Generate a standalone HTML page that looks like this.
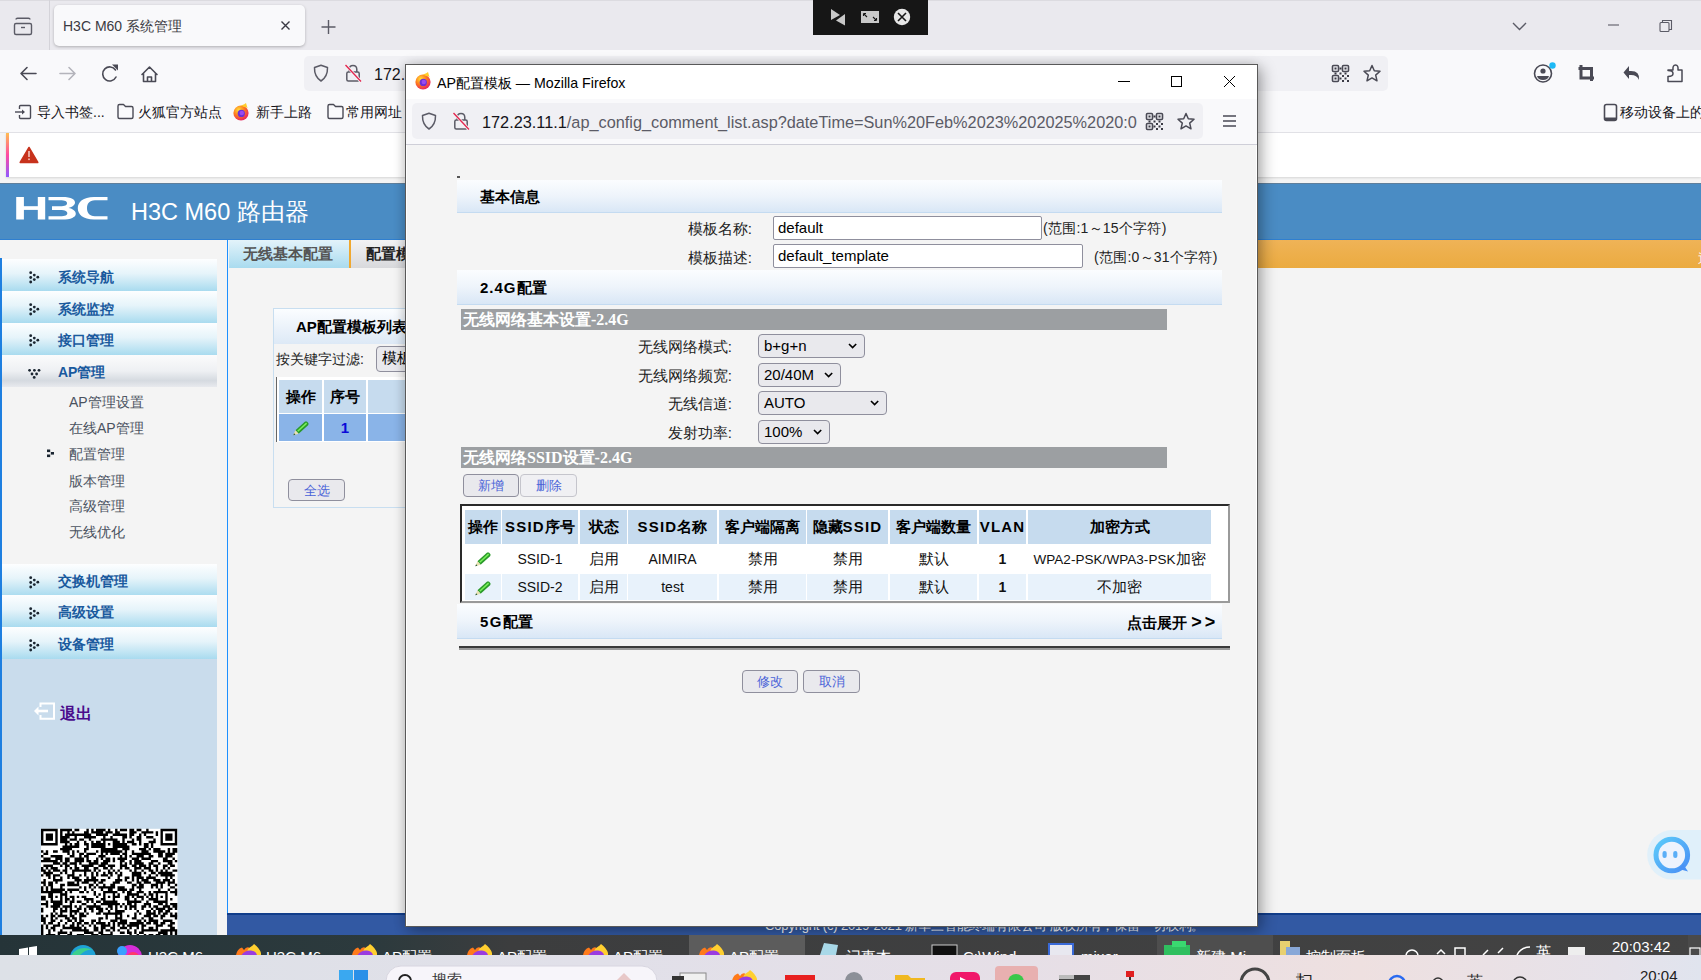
<!DOCTYPE html>
<html><head><meta charset="utf-8">
<style>
*{box-sizing:border-box;margin:0;padding:0}
html,body{width:1701px;height:980px;overflow:hidden;background:#f4f4f4;font-family:"Liberation Sans",sans-serif;}
.a{position:absolute}
svg{position:absolute;overflow:visible}
/* browser chrome */
#tabbar{left:0;top:0;width:1701px;height:50px;background:#eae9ee;border-top:1px solid #dcdbe0}
#tab{left:54px;top:5px;width:251px;height:41px;background:#f9f9fb;border-radius:5px;box-shadow:0 1px 3px rgba(0,0,0,.25)}
#nav{left:0;top:50px;width:1701px;height:42px;background:#f9f9fb}
#url{left:304px;top:56px;width:1084px;height:35px;background:#f0f0f4;border-radius:5px}
#bm{left:0;top:92px;width:1701px;height:41px;background:#f9f9fb;border-bottom:1px solid #e3e3e8}
.bmt{font-size:14px;color:#15141a;top:104px;white-space:nowrap}
#notif{left:6px;top:133px;width:1695px;height:44px;background:#fff;box-shadow:0 1px 2px rgba(0,0,0,.12)}
#notifbar{left:6px;top:133px;width:3px;height:44px;background:linear-gradient(#ffbd4f,#ff4aa2 50%,#9059ff)}
/* page */
#hdr{left:0;top:183px;width:1701px;height:57px;background:#4a8cc4;border-top:1px solid #5f7f9c;border-bottom:1px solid #2f7fd0}
#side{left:0;top:240px;width:227px;height:695px;background:#f4f4f4}
#sideline{left:227px;top:240px;width:1px;height:673px;background:#1e90ff}
#sideleft{left:0;top:258px;width:2px;height:677px;background:#1e7fe0}
.mi{left:2px;width:215px;height:32px;background:linear-gradient(#fdfeff 0%,#e6f4fa 45%,#a9dbef 100%)}
.mt{left:58px;font-size:14px;font-weight:bold;color:#1a5a9e;white-space:nowrap}
.si{left:69px;font-size:14px;color:#4a5260;white-space:nowrap}
#footer{left:227px;top:913px;width:1474px;height:22px;background:#3259a3;border-top:2px solid #113d8a}
#tb1{left:0;top:935px;width:1701px;height:20px;background:#2b3436}
#tb2{left:0;top:955px;width:1701px;height:25px;background:linear-gradient(90deg,#dfe3ea,#e2dfea 40%,#e8e0e6 70%,#eadfe2)}
/* popup */
#pop{left:405px;top:64px;width:853px;height:863px;background:#f4f4f4;border:1px solid #595959;box-shadow:4px 4px 14px rgba(0,0,0,.33),-2px 0 10px rgba(0,0,0,.1),inset 1px 0 #fff,inset -1px 0 #fff}
.band{left:52px;width:765px;height:34px;background:linear-gradient(#fbfdff 0%,#eef4fb 50%,#d9e7f6 100%);border-bottom:1px solid #c4dbf1}
.bt{font-size:15px;font-weight:bold;color:#000;white-space:nowrap}
.lbl{font-size:15px;color:#222;white-space:nowrap;text-align:right}
.gbar{left:56px;width:706px;height:21px;background:#9c9fa2}
.gt{left:2px;top:0;font-family:"Liberation Serif",serif;font-size:16px;font-weight:bold;color:#fff;white-space:nowrap;line-height:21px}
.sel{height:24px;background:#e9e9ed;border:1px solid #8f8f9d;border-radius:4px;font-size:15px;color:#000;padding-left:5px;line-height:22px}
.btn{height:23px;background:#e9e9ed;border:1px solid #8f8f9d;border-radius:4px;font-size:13px;color:#4a63d8;text-align:center;line-height:21px}
.th{top:5px;height:34px;background:#c6dbee;font-size:15px;font-weight:bold;color:#000;text-align:center;line-height:34px;white-space:nowrap}
.td{height:29px;font-size:15px;color:#111;text-align:center;line-height:29px;white-space:nowrap}
</style></head><body>

<!-- ===== browser chrome ===== -->
<div id="tabbar" class="a"></div>
<div class="a" style="left:49px;top:0;width:1px;height:50px;background:#d4d3d9"></div>
<div id="tab" class="a"></div>
<div class="a" style="left:63px;top:18px;font-size:14px;color:#3b3a42;white-space:nowrap">H3C M60 系统管理</div>
<div id="nav" class="a"></div>
<div id="url" class="a"></div>
<div id="bm" class="a"></div>
<div class="a bmt" style="left:37px">导入书签...</div>
<div class="a bmt" style="left:138px">火狐官方站点</div>
<div class="a bmt" style="left:256px">新手上路</div>
<div class="a bmt" style="left:346px">常用网址</div>
<div class="a bmt" style="left:1620px">移动设备上的</div>
<div id="notif" class="a"></div>
<div id="notifbar" class="a"></div>

<!-- ===== page ===== -->
<div id="hdr" class="a"></div>
<div class="a" style="left:131px;top:196px;font-size:23.5px;color:#fff;white-space:nowrap">H3C M60 路由器</div>
<div id="side" class="a"></div>
<div id="sideleft" class="a"></div>
<div id="sideline" class="a"></div>
<div class="a" style="left:2px;top:659px;width:215px;height:276px;background:#c9dcec"></div>

<div class="a mi" style="top:259px"></div><div class="a mt" style="top:269px">系统导航</div>
<div class="a mi" style="top:291px"></div><div class="a mt" style="top:301px">系统监控</div>
<div class="a mi" style="top:323px"></div><div class="a mt" style="top:332px">接口管理</div>
<div class="a mi" style="top:355px;background:linear-gradient(#fbfbfc,#eef0f3 50%,#d5dae0 80%,#e8eaee)"></div><div class="a mt" style="top:364px">AP管理</div>
<div class="a si" style="top:394px">AP管理设置</div>
<div class="a si" style="top:420px">在线AP管理</div>
<div class="a si" style="top:446px">配置管理</div>
<div class="a si" style="top:473px">版本管理</div>
<div class="a si" style="top:498px">高级管理</div>
<div class="a si" style="top:524px">无线优化</div>
<div class="a mi" style="top:564px"></div><div class="a mt" style="top:573px">交换机管理</div>
<div class="a mi" style="top:595px"></div><div class="a mt" style="top:604px">高级设置</div>
<div class="a mi" style="top:627px"></div><div class="a mt" style="top:636px">设备管理</div>
<div class="a" style="left:60px;top:704px;font-size:16px;font-weight:bold;color:#4a0c8c">退出</div>

<!-- tabs -->
<div class="a" style="left:229px;top:240px;width:120px;height:28px;background:linear-gradient(#e3f3fa,#a9dbef)"></div>
<div class="a" style="left:243px;top:245px;font-size:15px;font-weight:bold;color:#555;white-space:nowrap">无线基本配置</div>
<div class="a" style="left:349px;top:240px;width:2px;height:28px;background:#f0a830"></div>
<div class="a" style="left:351px;top:240px;width:60px;height:28px;background:linear-gradient(#f2f2f4,#d8d9dc)"></div>
<div class="a" style="left:366px;top:245px;font-size:15px;font-weight:bold;color:#222;white-space:nowrap">配置模</div>
<div class="a" style="left:1258px;top:240px;width:443px;height:28px;background:linear-gradient(#efb357,#ebab40)"></div>
<div class="a" style="left:1698px;top:250px;font-size:13px;color:#fff;white-space:nowrap">退</div>

<!-- panel behind -->
<div class="a" style="left:273px;top:308px;width:140px;height:200px;border:1px solid #c8def0;background:#f4f4f4"></div>
<div class="a" style="left:274px;top:309px;width:140px;height:35px;background:linear-gradient(#fbfdff,#dde9f6)"></div>
<div class="a bt" style="left:296px;top:318px">AP配置模板列表</div>
<div class="a" style="left:276px;top:351px;font-size:14px;color:#222;white-space:nowrap">按关键字过滤:</div>
<div class="a sel" style="left:376px;top:346px;width:40px;height:26px">模板</div>
<div class="a" style="left:276px;top:377px;width:140px;height:65px;background:#fff;border-left:1px solid #666"></div>
<div class="a th" style="left:279px;top:380px;width:43px;height:33px;line-height:33px">操作</div>
<div class="a th" style="left:324px;top:380px;width:42px;height:33px;line-height:33px">序号</div>
<div class="a th" style="left:368px;top:380px;width:50px;height:33px"></div>
<div class="a" style="left:279px;top:414px;width:43px;height:27px;background:#8ab4e8"></div>
<div class="a" style="left:324px;top:414px;width:42px;height:27px;background:#8ab4e8;color:#0a0ad8;font-size:15px;font-weight:bold;text-align:center;line-height:27px">1</div>
<div class="a" style="left:368px;top:414px;width:50px;height:27px;background:#8ab4e8"></div>
<div class="a btn" style="left:288px;top:479px;width:57px;height:22px">全选</div>

<div id="footer" class="a"></div>
<div class="a" style="left:765px;top:917px;font-size:13px;letter-spacing:-0.15px;color:#fff;white-space:nowrap">Copyright (c) 2019-2021 新华三智能终端有限公司 版权所有，保留一切权利。</div>


<!-- ===== popup ===== -->
<div id="pop" class="a">
  <div class="a" style="left:0;top:0;width:851px;height:34px;background:#fff"></div>
  <div class="a" style="left:31px;top:9px;font-size:14.2px;color:#000;white-space:nowrap">AP配置模板 — Mozilla Firefox</div>
  <div class="a" style="left:0;top:34px;width:851px;height:46px;background:#f9f9fb;border-bottom:1px solid #cfcfd8"></div>
  <div class="a" style="left:6px;top:38px;width:791px;height:36px;background:#f0f0f4;border-radius:5px"></div>
  <div class="a" style="left:76px;top:48px;width:656px;overflow:hidden;font-size:16.3px;color:#15141a;white-space:nowrap">172.23.11.1<span style="color:#5b5b66">/ap_config_comment_list.asp?dateTime=Sun%20Feb%2023%202025%2020:0</span></div>

  <div class="a" style="left:51px;top:111px;width:3px;height:2px;background:#555"></div>
  <div class="a band" style="left:51px;top:115px;height:33px"></div>
  <div class="a bt" style="left:74px;top:123px">基本信息</div>
  <div class="a lbl" style="left:226px;top:155px;width:120px">模板名称:</div>
  <div class="a" style="left:367px;top:151px;width:269px;height:24px;background:#fff;border:1px solid #8f8f9d;border-radius:2px;font-size:15px;padding-left:4px;line-height:22px;color:#000">default</div>
  <div class="a" style="left:637px;top:155px;font-size:14px;letter-spacing:.25px;color:#222;white-space:nowrap">(范围:1～15个字符)</div>
  <div class="a lbl" style="left:226px;top:184px;width:120px">模板描述:</div>
  <div class="a" style="left:367px;top:179px;width:310px;height:24px;background:#fff;border:1px solid #8f8f9d;border-radius:2px;font-size:15px;padding-left:4px;line-height:22px;color:#000">default_template</div>
  <div class="a" style="left:688px;top:184px;font-size:14px;letter-spacing:.25px;color:#222;white-space:nowrap">(范围:0～31个字符)</div>

  <div class="a band" style="left:51px;top:205px;height:35px"></div>
  <div class="a bt" style="left:74px;top:214px"><span style="letter-spacing:1px">2.4G</span>配置</div>
  <div class="a gbar" style="left:55px;top:244px"><div class="a gt">无线网络基本设置-2.4G</div></div>
  <div class="a lbl" style="left:166px;top:273px;width:160px">无线网络模式:</div>
  <div class="a sel" style="left:352px;top:269px;width:107px">b+g+n<svg style="left:89px;top:8px" width="10" height="7"><path d="M1 1 L4.6 4.6 L8.2 1" fill="none" stroke="#000" stroke-width="1.6"/></svg></div>
  <div class="a lbl" style="left:166px;top:302px;width:160px">无线网络频宽:</div>
  <div class="a sel" style="left:352px;top:298px;width:83px">20/40M<svg style="left:65px;top:8px" width="10" height="7"><path d="M1 1 L4.6 4.6 L8.2 1" fill="none" stroke="#000" stroke-width="1.6"/></svg></div>
  <div class="a lbl" style="left:166px;top:330px;width:160px">无线信道:</div>
  <div class="a sel" style="left:352px;top:326px;width:129px">AUTO<svg style="left:111px;top:8px" width="10" height="7"><path d="M1 1 L4.6 4.6 L8.2 1" fill="none" stroke="#000" stroke-width="1.6"/></svg></div>
  <div class="a lbl" style="left:166px;top:359px;width:160px">发射功率:</div>
  <div class="a sel" style="left:352px;top:355px;width:72px">100%<svg style="left:54px;top:8px" width="10" height="7"><path d="M1 1 L4.6 4.6 L8.2 1" fill="none" stroke="#000" stroke-width="1.6"/></svg></div>
  <div class="a gbar" style="left:55px;top:382px;height:21px"><div class="a gt">无线网络SSID设置-2.4G</div></div>
  <div class="a btn" style="left:57px;top:409px;width:56px">新增</div>
  <div class="a btn" style="left:114px;top:409px;width:57px;background:#f0f0f3;border-color:#c5c5cc">删除</div>

  <div class="a" style="left:54px;top:439px;width:770px;height:99px;background:#fff;border:2px solid;border-color:#2a2a2a #9a9a9a #9a9a9a #2a2a2a"></div>
  <div class="a th" style="left:59px;top:445px;width:36px">操作</div>
  <div class="a th" style="left:96px;top:445px;width:76px"><span style="letter-spacing:1.2px">SSID</span>序号</div>
  <div class="a th" style="left:174px;top:445px;width:47px">状态</div>
  <div class="a th" style="left:222px;top:445px;width:89px"><span style="letter-spacing:1.2px">SSID</span>名称</div>
  <div class="a th" style="left:313px;top:445px;width:87px">客户端隔离</div>
  <div class="a th" style="left:401px;top:445px;width:81px">隐藏<span style="letter-spacing:1.2px">SSID</span></div>
  <div class="a th" style="left:484px;top:445px;width:87px">客户端数量</div>
  <div class="a th" style="left:573px;top:445px;width:47px"><span style="letter-spacing:1.2px">VLAN</span></div>
  <div class="a th" style="left:622px;top:445px;width:183px">加密方式</div>
  <div class="a td" style="left:59px;top:479px;width:36px"></div><div class="a td" style="left:96px;top:479px;width:76px"><span style="font-size:14px">SSID-1</span></div><div class="a td" style="left:174px;top:479px;width:47px">启用</div><div class="a td" style="left:222px;top:479px;width:89px"><span style="font-size:14px">AIMIRA</span></div><div class="a td" style="left:313px;top:479px;width:87px">禁用</div><div class="a td" style="left:401px;top:479px;width:81px">禁用</div><div class="a td" style="left:484px;top:479px;width:87px">默认</div><div class="a td" style="left:573px;top:479px;width:47px"><span style="font-size:14px;font-weight:bold">1</span></div><div class="a td" style="left:622px;top:479px;width:183px"><span style="font-size:13.5px;letter-spacing:0.05px">WPA2-PSK/WPA3-PSK</span>加密</div><div class="a td" style="left:59px;top:509px;width:36px;height:26px;line-height:26px;background:#e8f2fb"></div><div class="a td" style="left:96px;top:509px;width:76px;height:26px;line-height:26px;background:#e8f2fb"><span style="font-size:14px">SSID-2</span></div><div class="a td" style="left:174px;top:509px;width:47px;height:26px;line-height:26px;background:#e8f2fb">启用</div><div class="a td" style="left:222px;top:509px;width:89px;height:26px;line-height:26px;background:#e8f2fb"><span style="font-size:14px">test</span></div><div class="a td" style="left:313px;top:509px;width:87px;height:26px;line-height:26px;background:#e8f2fb">禁用</div><div class="a td" style="left:401px;top:509px;width:81px;height:26px;line-height:26px;background:#e8f2fb">禁用</div><div class="a td" style="left:484px;top:509px;width:87px;height:26px;line-height:26px;background:#e8f2fb">默认</div><div class="a td" style="left:573px;top:509px;width:47px;height:26px;line-height:26px;background:#e8f2fb"><span style="font-size:14px;font-weight:bold">1</span></div><div class="a td" style="left:622px;top:509px;width:183px;height:26px;line-height:26px;background:#e8f2fb">不加密</div>
  <div class="a band" style="left:51px;top:539px;height:35px"></div>
  <div class="a bt" style="left:74px;top:548px"><span style="letter-spacing:1.5px">5G</span>配置</div>
  <div class="a bt" style="left:721px;top:547px">点击展开 <span style="letter-spacing:3px;font-size:18px">&gt;&gt;</span></div>
  <div class="a" style="left:53px;top:581px;width:771px;height:4px;border-top:2px solid #3a3a3a;border-bottom:2px solid #9a9a9a"></div>
  <div class="a btn" style="left:336px;top:605px;width:56px">修改</div>
  <div class="a btn" style="left:397px;top:605px;width:57px">取消</div>
</div>

<!-- overlay toolbar -->
<div class="a" style="left:813px;top:0;width:115px;height:35px;background:#161616"></div>


<!-- chrome icons -->
<svg style="left:0;top:0" width="1701" height="980">
 <defs>
  <g id="ffx">
   <radialGradient id="fg1" cx="0.35" cy="0.3" r="0.8"><stop offset="0" stop-color="#ffde3a"/><stop offset="0.45" stop-color="#ff7b1c"/><stop offset="1" stop-color="#e3136f"/></radialGradient>
   <circle cx="8" cy="9" r="7.6" fill="url(#fg1)"/>
   <path d="M8 1.5 Q12 0 13 -1 Q14 3 15.5 6 Q15 3 11 3 Z" fill="#ffcc2b"/>
   <circle cx="8.3" cy="9.4" r="3.6" fill="#6c2fd6"/>
   <circle cx="8.8" cy="9" r="2.2" fill="#9a4af0"/>
  </g>
  <g id="shield"><path d="M8 1.2 L14.5 3.5 Q14.8 12.5 8 17 Q1.2 12.5 1.5 3.5 Z" fill="none" stroke="#5b5b66" stroke-width="1.5" stroke-linejoin="round"/></g>
  <g id="lock"><path d="M4.2 8 V5.5 Q4.2 1.5 8 1.5 Q11.8 1.5 11.8 5.5 V8" fill="none" stroke="#5b5b66" stroke-width="1.5"/><rect x="1.8" y="8" width="12.4" height="9" rx="1.5" fill="none" stroke="#5b5b66" stroke-width="1.5"/><path d="M0.5 1 L16 17.5" stroke="#f5f5f7" stroke-width="3"/><path d="M0.5 1 L16 17.5" stroke="#e22850" stroke-width="1.4"/></g>
  <g id="qr" fill="#3a3a44">
   <rect x="0.5" y="0.5" width="6" height="6" rx="1" fill="none" stroke="#4a4a55" stroke-width="1.6"/><rect x="10.5" y="0.5" width="6" height="6" rx="1" fill="none" stroke="#4a4a55" stroke-width="1.6"/><rect x="0.5" y="10.5" width="6" height="6" rx="1" fill="none" stroke="#4a4a55" stroke-width="1.6"/>
   <rect x="2.5" y="2.5" width="2" height="2"/><rect x="12.5" y="2.5" width="2" height="2"/><rect x="2.5" y="12.5" width="2" height="2"/>
   <rect x="7.5" y="2.5" width="2" height="2"/><rect x="2.5" y="7.5" width="2" height="2"/><rect x="7.5" y="7.5" width="2" height="2"/><rect x="12.5" y="7.5" width="2" height="2"/><rect x="10" y="10" width="2" height="2"/><rect x="15" y="10" width="2" height="2"/><rect x="7.5" y="12.5" width="2" height="2"/><rect x="12.5" y="12.5" width="2" height="2"/><rect x="10" y="15" width="2" height="2"/><rect x="15" y="15" width="2" height="2"/>
  </g>
  <g id="star"><path d="M9 1 L11.3 6.2 L17 6.8 L12.7 10.6 L14 16.3 L9 13.4 L4 16.3 L5.3 10.6 L1 6.8 L6.7 6.2 Z" fill="none" stroke="#4a4a55" stroke-width="1.5" stroke-linejoin="round"/></g>
 </defs>

 <!-- tab bar -->
 <g fill="none" stroke="#5b5b66" stroke-width="1.4">
  <rect x="14.5" y="23.5" width="17" height="11" rx="1.5"/>
  <path d="M16 19.5 Q16 18.3 17.5 18.3 H28.5 Q30 18.3 30 19.5"/>
  <path d="M21 27.5 H25"/>
  <path d="M281.5 21.5 L289.5 29.5 M289.5 21.5 L281.5 29.5" stroke="#3a3a44"/>
  <path d="M328.5 20 V34 M321.5 27 H335.5"/>
  <path d="M1513 23 L1519.5 29.5 L1526 23"/>
  <path d="M1608 25 H1619" stroke-width="1.1"/>
  <rect x="1660" y="22.5" width="9" height="9" rx="1" stroke-width="1.1"/>
  <path d="M1662.5 22.5 V20.5 H1671.5 V29.5 H1669" stroke-width="1.1"/>
 </g>
 <!-- nav bar -->
 <g fill="none" stroke="#4a4a55" stroke-width="1.6" stroke-linecap="round" stroke-linejoin="round">
  <path d="M36 73.5 H21 M27 67.5 L21 73.5 L27 79.5"/>
  <path d="M60 73.5 H75 M69 67.5 L75 73.5 L69 79.5" stroke="#b4b4bb"/>
  <path d="M115.5 70 A7 7 0 1 0 116 77"/>
  <path d="M142 74.5 L149.5 67 L157 74.5 M143.5 73 V81.5 H155.5 V73 M147.5 81.5 V77 H151.5 V81.5"/>
 </g>
 <path d="M112 64.5 L118 64.5 L118 70.5 Z" fill="#4a4a55"/>
 <use href="#shield" x="313" y="64"/>
 <use href="#lock" x="345" y="64"/>
 <use href="#qr" x="1332" y="65"/>
 <use href="#star" x="1363" y="64.5"/>
 <g fill="none" stroke="#4a4a55" stroke-width="1.6">
  <circle cx="1543" cy="73.5" r="8.5"/>
 </g>
 <circle cx="1543" cy="71" r="2.6" fill="#4a4a55"/>
 <path d="M1537 76 H1549 Q1548 80 1543 80 Q1538 80 1537 76 Z" fill="#4a4a55"/>
 <circle cx="1552.5" cy="65.5" r="3.2" fill="#1db9f5"/>
 <path d="M1581 65 V78 H1594 M1578.5 68.5 H1591.5 V81" fill="none" stroke="#4a4a55" stroke-width="3"/>
 <path d="M1639 80 Q1640 71 1631 71 H1629 V66 L1623.5 72.5 L1629 79 V75 H1631 Q1637 75 1639 80 Z" fill="#4a4a55"/>
 <path d="M1668 70 H1673 Q1672.5 65 1675.5 65 Q1678.5 65 1678 70 H1682 V81.5 H1668 V76.5 Q1673 76.5 1673 73.5 Q1673 70.5 1668 70.5 Z" fill="none" stroke="#4a4a55" stroke-width="1.5" stroke-linejoin="round"/>
 <text x="374" y="80" font-family="Liberation Sans" font-size="16" fill="#15141a">172.</text>
 <!-- bookmarks -->
 <g fill="none" stroke="#4a4a55" stroke-width="1.4" stroke-linejoin="round">
  <path d="M19.5 106.5 Q19.5 105.5 20.5 105.5 H29.5 Q30.5 105.5 30.5 106.5 V117.5 Q30.5 118.5 29.5 118.5 H20.5 Q19.5 118.5 19.5 117.5 V115 M19.5 109 V106.5"/>
  <path d="M15 112 H24"/>
  <path d="M118 106 Q118 104.5 119.5 104.5 H123.5 L125.5 106.5 H131.5 Q133 106.5 133 108 V117 Q133 118.5 131.5 118.5 H119.5 Q118 118.5 118 117 Z"/>
  <path d="M328 106 Q328 104.5 329.5 104.5 H333.5 L335.5 106.5 H341.5 Q343 106.5 343 108 V117 Q343 118.5 341.5 118.5 H329.5 Q328 118.5 328 117 Z"/>
  <rect x="1604.5" y="104.5" width="12" height="16" rx="2" stroke-width="1.6"/><path d="M1605 119 H1616" stroke-width="3"/>
 </g>
 <path d="M22 109.5 L25 112 L22 114.5 Z" fill="#4a4a55"/>
 <use href="#ffx" x="233" y="104"/>
 <!-- warning -->
 <path d="M29 147.5 L37.8 162.5 H20.2 Z" fill="#c7321c" stroke="#c7321c" stroke-width="1.5" stroke-linejoin="round"/>
 <rect x="28.2" y="151" width="1.6" height="6" fill="#f3c4bb"/><rect x="28.2" y="158.5" width="1.6" height="1.6" fill="#f3c4bb"/>

 <!-- overlay toolbar icons -->
 <path d="M831 9 L840 15 L831 20 Z M845 14 L845 25.5 L836 20.5 Z" fill="#c8c8c8"/>
 <rect x="861" y="11" width="18" height="12" fill="#c8c8c8"/>
 <path d="M863.5 13.5 L867 17 M863.5 13.5 H866 M863.5 13.5 V16 M876.5 20.5 L873 17 M876.5 20.5 H874 M876.5 20.5 V18" stroke="#161616" stroke-width="1.1" fill="none"/>
 <circle cx="902" cy="17" r="8.2" fill="#e6e6e6"/>
 <path d="M898 13 L906 21 M906 13 L898 21" stroke="#161616" stroke-width="1.6"/>

 <!-- popup chrome icons -->
 <use href="#ffx" x="415" y="73"/>
 <path d="M1118 81.5 H1130" stroke="#000" stroke-width="1"/>
 <rect x="1171.5" y="76.5" width="10" height="10" fill="none" stroke="#000" stroke-width="1"/>
 <path d="M1224 76 L1235 87 M1235 76 L1224 87" stroke="#000" stroke-width="1"/>
 <use href="#shield" x="421" y="112"/>
 <use href="#lock" x="453" y="112"/>
 <use href="#qr" x="1146" y="113"/>
 <use href="#star" x="1177" y="112.5"/>
 <path d="M1223 116 H1236 M1223 121 H1236 M1223 126 H1236" stroke="#4a4a55" stroke-width="1.4"/>
</svg>

<svg style="left:0;top:0" width="1701" height="980">
 <!-- H3C logo -->
 <g fill="#fff">
  <rect x="16.2" y="197" width="7.7" height="22.5"/><rect x="37.8" y="197" width="7.4" height="22.5"/><rect x="23" y="206.2" width="15.5" height="3.7"/>
  <path d="M48.5 197 H62 C72 197 75 199.5 75 202.5 C75 205 72.5 207 68.5 207.9 C73 208.7 75.8 211 75.8 213.7 C75.8 217.2 71 219.5 62 219.5 H48.5 V216.2 H60 C65.5 216.2 67.3 215 67.3 213.2 C67.3 211.2 65.5 209.9 60 209.9 H52 V206.3 H60 C65.3 206.3 67 205 67 203.2 C67 201.3 65.3 200.3 60 200.3 H48.5 Z"/>
  <path d="M107.5 197 H94 C83 197 77.8 202 77.8 208.3 C77.8 214.5 83 219.5 94 219.5 H107.5 V216.2 H95 C89 216.2 87 212.5 87 208.3 C87 204 89 200.3 95 200.3 H107.5 Z"/>
 </g>
 <!-- sidebar dot icons -->
 <g fill="#1a2530">
  <g transform="translate(0,0)"><circle cx="30.7" cy="272.7" r="1.4"/><circle cx="34.3" cy="275.1" r="1.4"/><circle cx="30.7" cy="277.5" r="1.4"/><circle cx="37.8" cy="277.2" r="1.4"/><circle cx="34.3" cy="279.6" r="1.4"/><circle cx="30.7" cy="282" r="1.4"/></g><g transform="translate(0,32)"><circle cx="30.7" cy="272.7" r="1.4"/><circle cx="34.3" cy="275.1" r="1.4"/><circle cx="30.7" cy="277.5" r="1.4"/><circle cx="37.8" cy="277.2" r="1.4"/><circle cx="34.3" cy="279.6" r="1.4"/><circle cx="30.7" cy="282" r="1.4"/></g><g transform="translate(0,63)"><circle cx="30.7" cy="272.7" r="1.4"/><circle cx="34.3" cy="275.1" r="1.4"/><circle cx="30.7" cy="277.5" r="1.4"/><circle cx="37.8" cy="277.2" r="1.4"/><circle cx="34.3" cy="279.6" r="1.4"/><circle cx="30.7" cy="282" r="1.4"/></g><g transform="translate(0,305)"><circle cx="30.7" cy="272.7" r="1.4"/><circle cx="34.3" cy="275.1" r="1.4"/><circle cx="30.7" cy="277.5" r="1.4"/><circle cx="37.8" cy="277.2" r="1.4"/><circle cx="34.3" cy="279.6" r="1.4"/><circle cx="30.7" cy="282" r="1.4"/></g><g transform="translate(0,336)"><circle cx="30.7" cy="272.7" r="1.4"/><circle cx="34.3" cy="275.1" r="1.4"/><circle cx="30.7" cy="277.5" r="1.4"/><circle cx="37.8" cy="277.2" r="1.4"/><circle cx="34.3" cy="279.6" r="1.4"/><circle cx="30.7" cy="282" r="1.4"/></g><g transform="translate(0,368)"><circle cx="30.7" cy="272.7" r="1.4"/><circle cx="34.3" cy="275.1" r="1.4"/><circle cx="30.7" cy="277.5" r="1.4"/><circle cx="37.8" cy="277.2" r="1.4"/><circle cx="34.3" cy="279.6" r="1.4"/><circle cx="30.7" cy="282" r="1.4"/></g>
  <circle cx="29.6" cy="370.3" r="1.4"/><circle cx="34.4" cy="370.3" r="1.4"/><circle cx="39" cy="370.3" r="1.4"/><circle cx="32" cy="374" r="1.4"/><circle cx="36.6" cy="374" r="1.4"/><circle cx="34.2" cy="377.4" r="1.4"/>
  <rect x="47" y="449.5" width="3.2" height="2.6"/><rect x="50.8" y="452" width="3.2" height="2.6"/><rect x="47" y="454.5" width="3.2" height="2.6"/>
 </g>
 <!-- logout icon -->
 <path d="M40.5 707 V703.5 H54 V718.7 H40.5 V715" fill="none" stroke="#fff" stroke-width="2"/>
 <path d="M48 711 H38" stroke="#fff" stroke-width="2.6"/>
 <path d="M34 711 L38.5 706.5 V715.5 Z" fill="#fff"/>
 <!-- QR -->
 <rect x="41" y="828.8" width="136.5" height="106.2" fill="#fff"/>
 <path d="M41.0 828.8h16.73v2.39h-16.73zM60.1 828.8h11.95v2.39h-11.95zM74.5 828.8h4.78v2.39h-4.78zM86.4 828.8h2.39v2.39h-2.39zM91.2 828.8h2.39v2.39h-2.39zM96.0 828.8h9.56v2.39h-9.56zM107.9 828.8h2.39v2.39h-2.39zM115.1 828.8h2.39v2.39h-2.39zM119.9 828.8h7.17v2.39h-7.17zM129.4 828.8h4.78v2.39h-4.78zM136.6 828.8h4.78v2.39h-4.78zM146.2 828.8h2.39v2.39h-2.39zM160.5 828.8h16.73v2.39h-16.73zM41.0 831.2h2.39v2.39h-2.39zM55.3 831.2h2.39v2.39h-2.39zM60.1 831.2h2.39v2.39h-2.39zM67.3 831.2h2.39v2.39h-2.39zM72.1 831.2h2.39v2.39h-2.39zM84.0 831.2h4.78v2.39h-4.78zM91.2 831.2h11.95v2.39h-11.95zM105.5 831.2h7.17v2.39h-7.17zM115.1 831.2h4.78v2.39h-4.78zM129.4 831.2h7.17v2.39h-7.17zM141.4 831.2h11.95v2.39h-11.95zM155.7 831.2h2.39v2.39h-2.39zM160.5 831.2h2.39v2.39h-2.39zM174.8 831.2h2.39v2.39h-2.39zM41.0 833.6h2.39v2.39h-2.39zM45.8 833.6h7.17v2.39h-7.17zM55.3 833.6h2.39v2.39h-2.39zM60.1 833.6h2.39v2.39h-2.39zM64.9 833.6h26.29v2.39h-26.29zM96.0 833.6h11.95v2.39h-11.95zM112.7 833.6h14.34v2.39h-14.34zM129.4 833.6h4.78v2.39h-4.78zM139.0 833.6h2.39v2.39h-2.39zM143.8 833.6h2.39v2.39h-2.39zM155.7 833.6h2.39v2.39h-2.39zM160.5 833.6h2.39v2.39h-2.39zM165.3 833.6h7.17v2.39h-7.17zM174.8 833.6h2.39v2.39h-2.39zM41.0 836.0h2.39v2.39h-2.39zM45.8 836.0h7.17v2.39h-7.17zM55.3 836.0h2.39v2.39h-2.39zM60.1 836.0h9.56v2.39h-9.56zM74.5 836.0h2.39v2.39h-2.39zM84.0 836.0h11.95v2.39h-11.95zM103.1 836.0h2.39v2.39h-2.39zM110.3 836.0h2.39v2.39h-2.39zM122.3 836.0h4.78v2.39h-4.78zM129.4 836.0h2.39v2.39h-2.39zM136.6 836.0h4.78v2.39h-4.78zM146.2 836.0h7.17v2.39h-7.17zM160.5 836.0h2.39v2.39h-2.39zM165.3 836.0h7.17v2.39h-7.17zM174.8 836.0h2.39v2.39h-2.39zM41.0 838.4h2.39v2.39h-2.39zM45.8 838.4h7.17v2.39h-7.17zM55.3 838.4h2.39v2.39h-2.39zM60.1 838.4h7.17v2.39h-7.17zM69.7 838.4h7.17v2.39h-7.17zM79.2 838.4h4.78v2.39h-4.78zM88.8 838.4h2.39v2.39h-2.39zM100.8 838.4h16.73v2.39h-16.73zM122.3 838.4h2.39v2.39h-2.39zM131.8 838.4h2.39v2.39h-2.39zM136.6 838.4h4.78v2.39h-4.78zM153.3 838.4h2.39v2.39h-2.39zM160.5 838.4h2.39v2.39h-2.39zM165.3 838.4h7.17v2.39h-7.17zM174.8 838.4h2.39v2.39h-2.39zM41.0 840.8h2.39v2.39h-2.39zM55.3 840.8h2.39v2.39h-2.39zM60.1 840.8h9.56v2.39h-9.56zM76.8 840.8h2.39v2.39h-2.39zM84.0 840.8h2.39v2.39h-2.39zM91.2 840.8h2.39v2.39h-2.39zM96.0 840.8h4.78v2.39h-4.78zM103.1 840.8h2.39v2.39h-2.39zM112.7 840.8h7.17v2.39h-7.17zM122.3 840.8h2.39v2.39h-2.39zM127.0 840.8h7.17v2.39h-7.17zM139.0 840.8h2.39v2.39h-2.39zM148.6 840.8h7.17v2.39h-7.17zM160.5 840.8h2.39v2.39h-2.39zM174.8 840.8h2.39v2.39h-2.39zM41.0 843.1h16.73v2.39h-16.73zM64.9 843.1h2.39v2.39h-2.39zM69.7 843.1h2.39v2.39h-2.39zM74.5 843.1h4.78v2.39h-4.78zM84.0 843.1h4.78v2.39h-4.78zM91.2 843.1h14.34v2.39h-14.34zM107.9 843.1h2.39v2.39h-2.39zM112.7 843.1h14.34v2.39h-14.34zM131.8 843.1h4.78v2.39h-4.78zM139.0 843.1h2.39v2.39h-2.39zM143.8 843.1h4.78v2.39h-4.78zM150.9 843.1h2.39v2.39h-2.39zM160.5 843.1h16.73v2.39h-16.73zM62.5 845.5h16.73v2.39h-16.73zM86.4 845.5h2.39v2.39h-2.39zM91.2 845.5h14.34v2.39h-14.34zM112.7 845.5h16.73v2.39h-16.73zM143.8 845.5h4.78v2.39h-4.78zM150.9 845.5h2.39v2.39h-2.39zM60.1 847.9h11.95v2.39h-11.95zM84.0 847.9h4.78v2.39h-4.78zM100.8 847.9h16.73v2.39h-16.73zM122.3 847.9h7.17v2.39h-7.17zM139.0 847.9h7.17v2.39h-7.17zM148.6 847.9h2.39v2.39h-2.39zM153.3 847.9h7.17v2.39h-7.17zM167.7 847.9h2.39v2.39h-2.39zM172.5 847.9h4.78v2.39h-4.78zM41.0 850.3h2.39v2.39h-2.39zM45.8 850.3h2.39v2.39h-2.39zM53.0 850.3h4.78v2.39h-4.78zM62.5 850.3h7.17v2.39h-7.17zM72.1 850.3h2.39v2.39h-2.39zM76.8 850.3h2.39v2.39h-2.39zM84.0 850.3h2.39v2.39h-2.39zM96.0 850.3h2.39v2.39h-2.39zM100.8 850.3h21.51v2.39h-21.51zM124.7 850.3h2.39v2.39h-2.39zM131.8 850.3h2.39v2.39h-2.39zM141.4 850.3h7.17v2.39h-7.17zM153.3 850.3h11.95v2.39h-11.95zM167.7 850.3h2.39v2.39h-2.39zM172.5 850.3h4.78v2.39h-4.78zM43.4 852.7h4.78v2.39h-4.78zM67.3 852.7h2.39v2.39h-2.39zM72.1 852.7h2.39v2.39h-2.39zM79.2 852.7h4.78v2.39h-4.78zM86.4 852.7h9.56v2.39h-9.56zM100.8 852.7h2.39v2.39h-2.39zM105.5 852.7h2.39v2.39h-2.39zM110.3 852.7h9.56v2.39h-9.56zM122.3 852.7h4.78v2.39h-4.78zM131.8 852.7h19.12v2.39h-19.12zM158.1 852.7h4.78v2.39h-4.78zM165.3 852.7h9.56v2.39h-9.56zM41.0 855.1h2.39v2.39h-2.39zM50.6 855.1h11.95v2.39h-11.95zM69.7 855.1h4.78v2.39h-4.78zM79.2 855.1h2.39v2.39h-2.39zM84.0 855.1h4.78v2.39h-4.78zM98.4 855.1h7.17v2.39h-7.17zM119.9 855.1h2.39v2.39h-2.39zM124.7 855.1h2.39v2.39h-2.39zM129.4 855.1h2.39v2.39h-2.39zM136.6 855.1h7.17v2.39h-7.17zM148.6 855.1h4.78v2.39h-4.78zM158.1 855.1h4.78v2.39h-4.78zM165.3 855.1h7.17v2.39h-7.17zM43.4 857.5h7.17v2.39h-7.17zM55.3 857.5h7.17v2.39h-7.17zM64.9 857.5h4.78v2.39h-4.78zM74.5 857.5h9.56v2.39h-9.56zM86.4 857.5h2.39v2.39h-2.39zM96.0 857.5h2.39v2.39h-2.39zM100.8 857.5h2.39v2.39h-2.39zM105.5 857.5h4.78v2.39h-4.78zM112.7 857.5h2.39v2.39h-2.39zM117.5 857.5h9.56v2.39h-9.56zM131.8 857.5h7.17v2.39h-7.17zM141.4 857.5h9.56v2.39h-9.56zM162.9 857.5h4.78v2.39h-4.78zM172.5 857.5h2.39v2.39h-2.39zM41.0 859.9h16.73v2.39h-16.73zM60.1 859.9h2.39v2.39h-2.39zM64.9 859.9h4.78v2.39h-4.78zM74.5 859.9h9.56v2.39h-9.56zM86.4 859.9h4.78v2.39h-4.78zM93.6 859.9h4.78v2.39h-4.78zM103.1 859.9h7.17v2.39h-7.17zM112.7 859.9h2.39v2.39h-2.39zM119.9 859.9h4.78v2.39h-4.78zM129.4 859.9h2.39v2.39h-2.39zM134.2 859.9h7.17v2.39h-7.17zM150.9 859.9h7.17v2.39h-7.17zM162.9 859.9h9.56v2.39h-9.56zM174.8 859.9h2.39v2.39h-2.39zM53.0 862.3h7.17v2.39h-7.17zM62.5 862.3h4.78v2.39h-4.78zM69.7 862.3h7.17v2.39h-7.17zM79.2 862.3h2.39v2.39h-2.39zM88.8 862.3h9.56v2.39h-9.56zM100.8 862.3h7.17v2.39h-7.17zM119.9 862.3h2.39v2.39h-2.39zM124.7 862.3h2.39v2.39h-2.39zM129.4 862.3h2.39v2.39h-2.39zM134.2 862.3h9.56v2.39h-9.56zM148.6 862.3h4.78v2.39h-4.78zM158.1 862.3h2.39v2.39h-2.39zM167.7 862.3h4.78v2.39h-4.78zM43.4 864.6h9.56v2.39h-9.56zM60.1 864.6h2.39v2.39h-2.39zM64.9 864.6h4.78v2.39h-4.78zM74.5 864.6h2.39v2.39h-2.39zM81.6 864.6h11.95v2.39h-11.95zM98.4 864.6h7.17v2.39h-7.17zM107.9 864.6h7.17v2.39h-7.17zM119.9 864.6h7.17v2.39h-7.17zM131.8 864.6h4.78v2.39h-4.78zM139.0 864.6h7.17v2.39h-7.17zM148.6 864.6h2.39v2.39h-2.39zM153.3 864.6h4.78v2.39h-4.78zM162.9 864.6h4.78v2.39h-4.78zM170.1 864.6h4.78v2.39h-4.78zM41.0 867.0h2.39v2.39h-2.39zM45.8 867.0h2.39v2.39h-2.39zM50.6 867.0h7.17v2.39h-7.17zM64.9 867.0h2.39v2.39h-2.39zM69.7 867.0h2.39v2.39h-2.39zM74.5 867.0h4.78v2.39h-4.78zM84.0 867.0h4.78v2.39h-4.78zM93.6 867.0h4.78v2.39h-4.78zM103.1 867.0h4.78v2.39h-4.78zM110.3 867.0h2.39v2.39h-2.39zM119.9 867.0h2.39v2.39h-2.39zM124.7 867.0h4.78v2.39h-4.78zM134.2 867.0h7.17v2.39h-7.17zM143.8 867.0h7.17v2.39h-7.17zM155.7 867.0h2.39v2.39h-2.39zM162.9 867.0h2.39v2.39h-2.39zM167.7 867.0h2.39v2.39h-2.39zM41.0 869.4h4.78v2.39h-4.78zM48.2 869.4h2.39v2.39h-2.39zM53.0 869.4h7.17v2.39h-7.17zM62.5 869.4h4.78v2.39h-4.78zM72.1 869.4h19.12v2.39h-19.12zM93.6 869.4h2.39v2.39h-2.39zM98.4 869.4h2.39v2.39h-2.39zM107.9 869.4h2.39v2.39h-2.39zM112.7 869.4h2.39v2.39h-2.39zM117.5 869.4h2.39v2.39h-2.39zM129.4 869.4h2.39v2.39h-2.39zM134.2 869.4h2.39v2.39h-2.39zM141.4 869.4h2.39v2.39h-2.39zM148.6 869.4h4.78v2.39h-4.78zM155.7 869.4h2.39v2.39h-2.39zM160.5 869.4h2.39v2.39h-2.39zM165.3 869.4h2.39v2.39h-2.39zM172.5 869.4h4.78v2.39h-4.78zM43.4 871.8h9.56v2.39h-9.56zM60.1 871.8h2.39v2.39h-2.39zM64.9 871.8h2.39v2.39h-2.39zM72.1 871.8h2.39v2.39h-2.39zM84.0 871.8h2.39v2.39h-2.39zM91.2 871.8h2.39v2.39h-2.39zM96.0 871.8h2.39v2.39h-2.39zM103.1 871.8h2.39v2.39h-2.39zM107.9 871.8h4.78v2.39h-4.78zM115.1 871.8h2.39v2.39h-2.39zM119.9 871.8h2.39v2.39h-2.39zM131.8 871.8h9.56v2.39h-9.56zM143.8 871.8h2.39v2.39h-2.39zM150.9 871.8h4.78v2.39h-4.78zM158.1 871.8h14.34v2.39h-14.34zM41.0 874.2h2.39v2.39h-2.39zM45.8 874.2h4.78v2.39h-4.78zM53.0 874.2h7.17v2.39h-7.17zM67.3 874.2h7.17v2.39h-7.17zM79.2 874.2h2.39v2.39h-2.39zM84.0 874.2h2.39v2.39h-2.39zM91.2 874.2h2.39v2.39h-2.39zM96.0 874.2h2.39v2.39h-2.39zM100.8 874.2h7.17v2.39h-7.17zM110.3 874.2h2.39v2.39h-2.39zM117.5 874.2h4.78v2.39h-4.78zM131.8 874.2h9.56v2.39h-9.56zM148.6 874.2h2.39v2.39h-2.39zM155.7 874.2h2.39v2.39h-2.39zM160.5 874.2h14.34v2.39h-14.34zM48.2 876.6h2.39v2.39h-2.39zM53.0 876.6h2.39v2.39h-2.39zM60.1 876.6h2.39v2.39h-2.39zM67.3 876.6h2.39v2.39h-2.39zM72.1 876.6h7.17v2.39h-7.17zM86.4 876.6h2.39v2.39h-2.39zM91.2 876.6h4.78v2.39h-4.78zM107.9 876.6h2.39v2.39h-2.39zM117.5 876.6h2.39v2.39h-2.39zM124.7 876.6h4.78v2.39h-4.78zM131.8 876.6h2.39v2.39h-2.39zM136.6 876.6h7.17v2.39h-7.17zM146.2 876.6h9.56v2.39h-9.56zM165.3 876.6h2.39v2.39h-2.39zM170.1 876.6h2.39v2.39h-2.39zM43.4 879.0h2.39v2.39h-2.39zM53.0 879.0h9.56v2.39h-9.56zM74.5 879.0h7.17v2.39h-7.17zM84.0 879.0h14.34v2.39h-14.34zM100.8 879.0h4.78v2.39h-4.78zM115.1 879.0h7.17v2.39h-7.17zM124.7 879.0h2.39v2.39h-2.39zM131.8 879.0h2.39v2.39h-2.39zM136.6 879.0h2.39v2.39h-2.39zM141.4 879.0h7.17v2.39h-7.17zM153.3 879.0h7.17v2.39h-7.17zM162.9 879.0h7.17v2.39h-7.17zM172.5 879.0h2.39v2.39h-2.39zM41.0 881.4h4.78v2.39h-4.78zM48.2 881.4h4.78v2.39h-4.78zM55.3 881.4h2.39v2.39h-2.39zM67.3 881.4h7.17v2.39h-7.17zM76.8 881.4h2.39v2.39h-2.39zM81.6 881.4h7.17v2.39h-7.17zM93.6 881.4h2.39v2.39h-2.39zM98.4 881.4h4.78v2.39h-4.78zM112.7 881.4h7.17v2.39h-7.17zM127.0 881.4h4.78v2.39h-4.78zM136.6 881.4h4.78v2.39h-4.78zM143.8 881.4h7.17v2.39h-7.17zM155.7 881.4h9.56v2.39h-9.56zM167.7 881.4h7.17v2.39h-7.17zM43.4 883.8h2.39v2.39h-2.39zM48.2 883.8h4.78v2.39h-4.78zM60.1 883.8h4.78v2.39h-4.78zM67.3 883.8h11.95v2.39h-11.95zM88.8 883.8h4.78v2.39h-4.78zM96.0 883.8h2.39v2.39h-2.39zM103.1 883.8h2.39v2.39h-2.39zM110.3 883.8h4.78v2.39h-4.78zM131.8 883.8h4.78v2.39h-4.78zM139.0 883.8h4.78v2.39h-4.78zM150.9 883.8h7.17v2.39h-7.17zM160.5 883.8h2.39v2.39h-2.39zM167.7 883.8h2.39v2.39h-2.39zM174.8 883.8h2.39v2.39h-2.39zM41.0 886.2h2.39v2.39h-2.39zM45.8 886.2h2.39v2.39h-2.39zM50.6 886.2h2.39v2.39h-2.39zM60.1 886.2h2.39v2.39h-2.39zM79.2 886.2h2.39v2.39h-2.39zM84.0 886.2h2.39v2.39h-2.39zM88.8 886.2h2.39v2.39h-2.39zM93.6 886.2h2.39v2.39h-2.39zM98.4 886.2h16.73v2.39h-16.73zM117.5 886.2h7.17v2.39h-7.17zM131.8 886.2h2.39v2.39h-2.39zM136.6 886.2h7.17v2.39h-7.17zM150.9 886.2h2.39v2.39h-2.39zM155.7 886.2h2.39v2.39h-2.39zM160.5 886.2h2.39v2.39h-2.39zM170.1 886.2h4.78v2.39h-4.78zM41.0 888.5h2.39v2.39h-2.39zM45.8 888.5h2.39v2.39h-2.39zM50.6 888.5h14.34v2.39h-14.34zM67.3 888.5h11.95v2.39h-11.95zM84.0 888.5h2.39v2.39h-2.39zM91.2 888.5h2.39v2.39h-2.39zM100.8 888.5h2.39v2.39h-2.39zM107.9 888.5h4.78v2.39h-4.78zM117.5 888.5h9.56v2.39h-9.56zM129.4 888.5h4.78v2.39h-4.78zM139.0 888.5h2.39v2.39h-2.39zM158.1 888.5h2.39v2.39h-2.39zM167.7 888.5h2.39v2.39h-2.39zM174.8 888.5h2.39v2.39h-2.39zM41.0 890.9h21.51v2.39h-21.51zM64.9 890.9h2.39v2.39h-2.39zM69.7 890.9h2.39v2.39h-2.39zM79.2 890.9h4.78v2.39h-4.78zM86.4 890.9h2.39v2.39h-2.39zM93.6 890.9h2.39v2.39h-2.39zM103.1 890.9h14.34v2.39h-14.34zM122.3 890.9h2.39v2.39h-2.39zM127.0 890.9h4.78v2.39h-4.78zM136.6 890.9h7.17v2.39h-7.17zM148.6 890.9h2.39v2.39h-2.39zM153.3 890.9h14.34v2.39h-14.34zM170.1 890.9h7.17v2.39h-7.17zM48.2 893.3h4.78v2.39h-4.78zM60.1 893.3h7.17v2.39h-7.17zM93.6 893.3h2.39v2.39h-2.39zM98.4 893.3h2.39v2.39h-2.39zM103.1 893.3h2.39v2.39h-2.39zM112.7 893.3h2.39v2.39h-2.39zM117.5 893.3h2.39v2.39h-2.39zM127.0 893.3h11.95v2.39h-11.95zM143.8 893.3h2.39v2.39h-2.39zM148.6 893.3h4.78v2.39h-4.78zM155.7 893.3h2.39v2.39h-2.39zM165.3 893.3h2.39v2.39h-2.39zM174.8 893.3h2.39v2.39h-2.39zM41.0 895.7h4.78v2.39h-4.78zM48.2 895.7h4.78v2.39h-4.78zM55.3 895.7h2.39v2.39h-2.39zM60.1 895.7h2.39v2.39h-2.39zM64.9 895.7h2.39v2.39h-2.39zM69.7 895.7h4.78v2.39h-4.78zM76.8 895.7h2.39v2.39h-2.39zM81.6 895.7h4.78v2.39h-4.78zM96.0 895.7h2.39v2.39h-2.39zM103.1 895.7h2.39v2.39h-2.39zM107.9 895.7h2.39v2.39h-2.39zM112.7 895.7h7.17v2.39h-7.17zM124.7 895.7h4.78v2.39h-4.78zM131.8 895.7h2.39v2.39h-2.39zM136.6 895.7h7.17v2.39h-7.17zM146.2 895.7h2.39v2.39h-2.39zM150.9 895.7h2.39v2.39h-2.39zM155.7 895.7h2.39v2.39h-2.39zM160.5 895.7h2.39v2.39h-2.39zM165.3 895.7h2.39v2.39h-2.39zM41.0 898.1h4.78v2.39h-4.78zM50.6 898.1h2.39v2.39h-2.39zM60.1 898.1h2.39v2.39h-2.39zM64.9 898.1h4.78v2.39h-4.78zM72.1 898.1h2.39v2.39h-2.39zM84.0 898.1h9.56v2.39h-9.56zM100.8 898.1h4.78v2.39h-4.78zM112.7 898.1h2.39v2.39h-2.39zM124.7 898.1h4.78v2.39h-4.78zM134.2 898.1h2.39v2.39h-2.39zM141.4 898.1h2.39v2.39h-2.39zM148.6 898.1h9.56v2.39h-9.56zM165.3 898.1h2.39v2.39h-2.39zM170.1 898.1h2.39v2.39h-2.39zM45.8 900.5h2.39v2.39h-2.39zM50.6 900.5h11.95v2.39h-11.95zM64.9 900.5h2.39v2.39h-2.39zM69.7 900.5h4.78v2.39h-4.78zM76.8 900.5h4.78v2.39h-4.78zM86.4 900.5h2.39v2.39h-2.39zM91.2 900.5h2.39v2.39h-2.39zM96.0 900.5h4.78v2.39h-4.78zM103.1 900.5h14.34v2.39h-14.34zM127.0 900.5h14.34v2.39h-14.34zM146.2 900.5h2.39v2.39h-2.39zM153.3 900.5h14.34v2.39h-14.34zM41.0 902.9h7.17v2.39h-7.17zM53.0 902.9h9.56v2.39h-9.56zM69.7 902.9h2.39v2.39h-2.39zM81.6 902.9h4.78v2.39h-4.78zM93.6 902.9h2.39v2.39h-2.39zM100.8 902.9h19.12v2.39h-19.12zM122.3 902.9h2.39v2.39h-2.39zM127.0 902.9h4.78v2.39h-4.78zM134.2 902.9h2.39v2.39h-2.39zM143.8 902.9h7.17v2.39h-7.17zM158.1 902.9h4.78v2.39h-4.78zM165.3 902.9h2.39v2.39h-2.39zM170.1 902.9h7.17v2.39h-7.17zM45.8 905.3h2.39v2.39h-2.39zM50.6 905.3h9.56v2.39h-9.56zM62.5 905.3h9.56v2.39h-9.56zM74.5 905.3h2.39v2.39h-2.39zM79.2 905.3h2.39v2.39h-2.39zM86.4 905.3h14.34v2.39h-14.34zM107.9 905.3h4.78v2.39h-4.78zM115.1 905.3h2.39v2.39h-2.39zM119.9 905.3h2.39v2.39h-2.39zM124.7 905.3h2.39v2.39h-2.39zM129.4 905.3h7.17v2.39h-7.17zM141.4 905.3h4.78v2.39h-4.78zM148.6 905.3h2.39v2.39h-2.39zM153.3 905.3h4.78v2.39h-4.78zM162.9 905.3h7.17v2.39h-7.17zM172.5 905.3h4.78v2.39h-4.78zM41.0 907.7h2.39v2.39h-2.39zM53.0 907.7h4.78v2.39h-4.78zM60.1 907.7h2.39v2.39h-2.39zM64.9 907.7h2.39v2.39h-2.39zM69.7 907.7h2.39v2.39h-2.39zM76.8 907.7h4.78v2.39h-4.78zM84.0 907.7h2.39v2.39h-2.39zM88.8 907.7h4.78v2.39h-4.78zM96.0 907.7h7.17v2.39h-7.17zM105.5 907.7h2.39v2.39h-2.39zM110.3 907.7h2.39v2.39h-2.39zM115.1 907.7h2.39v2.39h-2.39zM124.7 907.7h2.39v2.39h-2.39zM129.4 907.7h2.39v2.39h-2.39zM134.2 907.7h2.39v2.39h-2.39zM141.4 907.7h2.39v2.39h-2.39zM150.9 907.7h2.39v2.39h-2.39zM155.7 907.7h9.56v2.39h-9.56zM167.7 907.7h4.78v2.39h-4.78zM174.8 907.7h2.39v2.39h-2.39zM41.0 910.1h2.39v2.39h-2.39zM53.0 910.1h2.39v2.39h-2.39zM60.1 910.1h7.17v2.39h-7.17zM69.7 910.1h9.56v2.39h-9.56zM84.0 910.1h2.39v2.39h-2.39zM91.2 910.1h2.39v2.39h-2.39zM98.4 910.1h4.78v2.39h-4.78zM107.9 910.1h2.39v2.39h-2.39zM115.1 910.1h9.56v2.39h-9.56zM136.6 910.1h2.39v2.39h-2.39zM146.2 910.1h4.78v2.39h-4.78zM153.3 910.1h2.39v2.39h-2.39zM158.1 910.1h4.78v2.39h-4.78zM165.3 910.1h4.78v2.39h-4.78zM50.6 912.4h2.39v2.39h-2.39zM55.3 912.4h2.39v2.39h-2.39zM60.1 912.4h2.39v2.39h-2.39zM69.7 912.4h2.39v2.39h-2.39zM74.5 912.4h2.39v2.39h-2.39zM79.2 912.4h4.78v2.39h-4.78zM86.4 912.4h2.39v2.39h-2.39zM96.0 912.4h4.78v2.39h-4.78zM103.1 912.4h19.12v2.39h-19.12zM134.2 912.4h2.39v2.39h-2.39zM139.0 912.4h2.39v2.39h-2.39zM146.2 912.4h9.56v2.39h-9.56zM158.1 912.4h2.39v2.39h-2.39zM162.9 912.4h4.78v2.39h-4.78zM170.1 912.4h2.39v2.39h-2.39zM174.8 912.4h2.39v2.39h-2.39zM41.0 914.8h2.39v2.39h-2.39zM45.8 914.8h2.39v2.39h-2.39zM50.6 914.8h4.78v2.39h-4.78zM57.7 914.8h9.56v2.39h-9.56zM69.7 914.8h4.78v2.39h-4.78zM79.2 914.8h7.17v2.39h-7.17zM105.5 914.8h2.39v2.39h-2.39zM115.1 914.8h2.39v2.39h-2.39zM119.9 914.8h2.39v2.39h-2.39zM127.0 914.8h2.39v2.39h-2.39zM134.2 914.8h2.39v2.39h-2.39zM143.8 914.8h7.17v2.39h-7.17zM153.3 914.8h4.78v2.39h-4.78zM160.5 914.8h4.78v2.39h-4.78zM170.1 914.8h7.17v2.39h-7.17zM41.0 917.2h4.78v2.39h-4.78zM50.6 917.2h2.39v2.39h-2.39zM55.3 917.2h2.39v2.39h-2.39zM64.9 917.2h4.78v2.39h-4.78zM72.1 917.2h4.78v2.39h-4.78zM79.2 917.2h2.39v2.39h-2.39zM98.4 917.2h4.78v2.39h-4.78zM105.5 917.2h2.39v2.39h-2.39zM115.1 917.2h7.17v2.39h-7.17zM131.8 917.2h4.78v2.39h-4.78zM141.4 917.2h2.39v2.39h-2.39zM148.6 917.2h4.78v2.39h-4.78zM160.5 917.2h2.39v2.39h-2.39zM174.8 917.2h2.39v2.39h-2.39zM41.0 919.6h4.78v2.39h-4.78zM50.6 919.6h4.78v2.39h-4.78zM60.1 919.6h2.39v2.39h-2.39zM67.3 919.6h4.78v2.39h-4.78zM74.5 919.6h2.39v2.39h-2.39zM79.2 919.6h4.78v2.39h-4.78zM91.2 919.6h4.78v2.39h-4.78zM98.4 919.6h2.39v2.39h-2.39zM110.3 919.6h7.17v2.39h-7.17zM119.9 919.6h7.17v2.39h-7.17zM136.6 919.6h4.78v2.39h-4.78zM143.8 919.6h2.39v2.39h-2.39zM148.6 919.6h9.56v2.39h-9.56zM162.9 919.6h9.56v2.39h-9.56zM43.4 922.0h2.39v2.39h-2.39zM48.2 922.0h4.78v2.39h-4.78zM57.7 922.0h2.39v2.39h-2.39zM64.9 922.0h2.39v2.39h-2.39zM72.1 922.0h2.39v2.39h-2.39zM76.8 922.0h4.78v2.39h-4.78zM84.0 922.0h4.78v2.39h-4.78zM91.2 922.0h2.39v2.39h-2.39zM96.0 922.0h9.56v2.39h-9.56zM107.9 922.0h2.39v2.39h-2.39zM112.7 922.0h2.39v2.39h-2.39zM117.5 922.0h9.56v2.39h-9.56zM129.4 922.0h14.34v2.39h-14.34zM146.2 922.0h4.78v2.39h-4.78zM153.3 922.0h4.78v2.39h-4.78zM160.5 922.0h4.78v2.39h-4.78zM170.1 922.0h4.78v2.39h-4.78zM41.0 924.4h2.39v2.39h-2.39zM45.8 924.4h2.39v2.39h-2.39zM53.0 924.4h7.17v2.39h-7.17zM62.5 924.4h2.39v2.39h-2.39zM69.7 924.4h4.78v2.39h-4.78zM76.8 924.4h2.39v2.39h-2.39zM81.6 924.4h2.39v2.39h-2.39zM88.8 924.4h2.39v2.39h-2.39zM93.6 924.4h2.39v2.39h-2.39zM100.8 924.4h9.56v2.39h-9.56zM112.7 924.4h2.39v2.39h-2.39zM117.5 924.4h2.39v2.39h-2.39zM122.3 924.4h2.39v2.39h-2.39zM127.0 924.4h11.95v2.39h-11.95zM141.4 924.4h4.78v2.39h-4.78zM155.7 924.4h7.17v2.39h-7.17zM167.7 924.4h4.78v2.39h-4.78zM41.0 926.8h2.39v2.39h-2.39zM45.8 926.8h2.39v2.39h-2.39zM50.6 926.8h4.78v2.39h-4.78zM62.5 926.8h19.12v2.39h-19.12zM84.0 926.8h2.39v2.39h-2.39zM93.6 926.8h4.78v2.39h-4.78zM100.8 926.8h4.78v2.39h-4.78zM110.3 926.8h4.78v2.39h-4.78zM119.9 926.8h7.17v2.39h-7.17zM129.4 926.8h2.39v2.39h-2.39zM136.6 926.8h2.39v2.39h-2.39zM141.4 926.8h2.39v2.39h-2.39zM148.6 926.8h4.78v2.39h-4.78zM155.7 926.8h2.39v2.39h-2.39zM170.1 926.8h4.78v2.39h-4.78zM41.0 929.2h2.39v2.39h-2.39zM48.2 929.2h2.39v2.39h-2.39zM53.0 929.2h2.39v2.39h-2.39zM60.1 929.2h2.39v2.39h-2.39zM72.1 929.2h16.73v2.39h-16.73zM93.6 929.2h4.78v2.39h-4.78zM100.8 929.2h2.39v2.39h-2.39zM105.5 929.2h4.78v2.39h-4.78zM112.7 929.2h2.39v2.39h-2.39zM117.5 929.2h2.39v2.39h-2.39zM127.0 929.2h2.39v2.39h-2.39zM134.2 929.2h2.39v2.39h-2.39zM141.4 929.2h16.73v2.39h-16.73zM160.5 929.2h16.73v2.39h-16.73zM41.0 931.6h2.39v2.39h-2.39zM48.2 931.6h2.39v2.39h-2.39zM57.7 931.6h9.56v2.39h-9.56zM69.7 931.6h2.39v2.39h-2.39zM84.0 931.6h9.56v2.39h-9.56zM98.4 931.6h4.78v2.39h-4.78zM110.3 931.6h2.39v2.39h-2.39zM119.9 931.6h4.78v2.39h-4.78zM127.0 931.6h4.78v2.39h-4.78zM134.2 931.6h2.39v2.39h-2.39zM139.0 931.6h4.78v2.39h-4.78zM158.1 931.6h9.56v2.39h-9.56zM170.1 931.6h2.39v2.39h-2.39zM174.8 931.6h2.39v2.39h-2.39zM41.0 934.0h2.39v2.39h-2.39zM45.8 934.0h9.56v2.39h-9.56zM57.7 934.0h2.39v2.39h-2.39zM67.3 934.0h4.78v2.39h-4.78zM76.8 934.0h7.17v2.39h-7.17zM91.2 934.0h7.17v2.39h-7.17zM100.8 934.0h11.95v2.39h-11.95zM129.4 934.0h2.39v2.39h-2.39zM136.6 934.0h2.39v2.39h-2.39zM143.8 934.0h2.39v2.39h-2.39zM148.6 934.0h4.78v2.39h-4.78zM155.7 934.0h4.78v2.39h-4.78zM162.9 934.0h4.78v2.39h-4.78zM170.1 934.0h2.39v2.39h-2.39zM174.8 934.0h2.39v2.39h-2.39z" fill="#000"/>
 <!-- chat bubble -->
 <path d="M1672 830 H1701 V879.6 H1672 A24.8 24.8 0 0 1 1672 830 Z" fill="#e0f0fa"/>
 <defs><linearGradient id="cg" x1="0" y1="0" x2="1" y2="1"><stop offset="0" stop-color="#5ccbfa"/><stop offset="1" stop-color="#4a8ff5"/></linearGradient></defs>
 <circle cx="1671.8" cy="855" r="15.8" fill="#eef3fd" stroke="url(#cg)" stroke-width="5"/>
 <path d="M1683 864 L1688 871.5 L1679 869 Z" fill="#4a92f5"/>
 <rect x="1662.5" y="851" width="4.2" height="7" rx="2.1" fill="#5aaef7"/><rect x="1673.2" y="851" width="4.2" height="7" rx="2.1" fill="#5aaef7"/>
 <!-- pencils -->
 <g stroke-linecap="round">
  <g id="pen"><polygon points="477.43,561.17 487.13,552.50 488.90,552.53 490.50,554.32 490.33,556.08 480.63,564.76" fill="#2a9a2a"/><polygon points="479.18,561.63 488.13,553.62 489.13,554.74 480.18,562.75" fill="#7af05a"/><polygon points="475.30,566.30 477.43,561.17 480.63,564.76" fill="#e8e0b0"/><polygon points="475.30,566.30 476.13,564.22 477.46,565.71" fill="#2a5a3a"/></g>
  <use href="#pen" x="0" y="29"/>
  <use href="#pen" x="-182" y="-131"/>
 </g>
</svg>

<!-- taskbar -->
<svg style="left:0;top:935px" width="1701" height="45">
 <defs><clipPath id="c1"><rect x="0" y="0" width="1701" height="20"/></clipPath><clipPath id="c2"><rect x="0" y="20" width="1701" height="25"/></clipPath>
 <linearGradient id="tbg" x1="0" x2="1"><stop offset="0" stop-color="#253438"/><stop offset="0.22" stop-color="#2c3a3d"/><stop offset="0.3" stop-color="#3c3d3e"/><stop offset="1" stop-color="#434343"/></linearGradient>
 <linearGradient id="tbl" x1="0" x2="1"><stop offset="0" stop-color="#dde1e7"/><stop offset="0.35" stop-color="#e1e0e9"/><stop offset="0.6" stop-color="#e6dfe7"/><stop offset="0.8" stop-color="#eee0e0"/><stop offset="0.95" stop-color="#e6e2ea"/><stop offset="1" stop-color="#e0e4ee"/></linearGradient>
 <g id="tff"><path d="M0 11 Q1 5 6 3.5 L8 6 Q10 2.5 13 3.5 L14 11 Z" fill="#ff7a1a"/><path d="M11 11 Q10.5 5 14.5 3 Q17 1.5 18 0 Q23.5 4 25 9 L25 11 Z" fill="#ffcf30"/><path d="M5.5 11 Q9 6 15 6.5 Q20 7 21 11 Z" fill="#9a3ce0"/></g>
 </defs>
 <rect x="0" y="0" width="1701" height="20" fill="url(#tbg)"/>
 <rect x="689" y="0" width="116" height="20" fill="#5c5c5c"/>
 <rect x="1157" y="0" width="116" height="20" fill="#4e4e4e"/>
 <rect x="1688" y="0" width="13" height="20" fill="#4a4a4a"/>
 <g clip-path="url(#c1)">
  <path d="M19 14 L28 12.5 V20 H19 Z M29 12.3 L37 11 V20 H29 Z" fill="#fff"/>
  <circle cx="83" cy="23" r="13" fill="#1fa2d6"/><path d="M70 22 Q78 9 93 15 Q86 14 80 20 Z" fill="#3ccf8e"/>
  <circle cx="130" cy="22" r="12" fill="#d62ed8"/><circle cx="133" cy="24" r="7" fill="#ff3a6a"/><circle cx="122" cy="16" r="5" fill="#3aa0ff"/>
  <text x="148" y="27" font-family="Liberation Sans" font-size="15" fill="#fff">H3C M6</text>
  <use href="#tff" x="236" y="9"/><text x="266" y="27" font-family="Liberation Sans" font-size="15" fill="#fff">H3C M6</text>
  <use href="#tff" x="352" y="9"/><text x="382" y="27" font-family="Liberation Sans" font-size="15" fill="#fff">AP配置</text>
  <use href="#tff" x="467" y="9"/><text x="497" y="27" font-family="Liberation Sans" font-size="15" fill="#fff">AP配置</text>
  <use href="#tff" x="583" y="9"/><text x="613" y="27" font-family="Liberation Sans" font-size="15" fill="#fff">AP配置</text>
  <use href="#tff" x="699" y="9"/><text x="729" y="27" font-family="Liberation Sans" font-size="15" fill="#fff">AP配置</text>
  <path d="M820 20 L824 8 L838 10 L836 20 Z" fill="#a8d8e8"/><text x="846" y="27" font-family="Liberation Sans" font-size="15" fill="#fff">记事本</text>
  <rect x="932" y="10" width="25" height="14" fill="#111" stroke="#ccc" stroke-width="1"/><text x="963" y="27" font-family="Liberation Sans" font-size="15" fill="#fff">C:\Wind</text>
  <rect x="1049" y="9" width="24" height="14" fill="#e8e8f0" stroke="#3a6ad8" stroke-width="2"/><text x="1081" y="27" font-family="Liberation Sans" font-size="15" fill="#fff">mixer</text>
  <rect x="1164" y="10" width="26" height="12" fill="#2fbf5f"/><rect x="1172" y="6" width="14" height="6" fill="#3ad870"/><text x="1196" y="27" font-family="Liberation Sans" font-size="15" fill="#fff">新建 Mi</text>
  <rect x="1280" y="6" width="10" height="14" fill="#e8d070"/><rect x="1286" y="12" width="14" height="10" fill="#88a8d8"/><text x="1306" y="27" font-family="Liberation Sans" font-size="15" fill="#fff">控制面板</text>
  <g fill="none" stroke="#fff" stroke-width="1.5"><circle cx="1412" cy="21" r="6"/><path d="M1437 19 L1441 15 L1445 19"/><path d="M1455 20 V13 H1465 V20"/><path d="M1483 20 L1488 15 M1498 18 L1503 13"/><path d="M1517 20 Q1521 12 1530 12"/></g>
  <text x="1536" y="22" font-family="Liberation Sans" font-size="15" fill="#fff">英</text>
  <rect x="1568" y="12" width="17" height="10" fill="#eee"/>
  <text x="1612" y="17" font-family="Liberation Sans" font-size="15" fill="#fff">20:03:42</text>
  <rect x="1690" y="13" width="10" height="10" fill="none" stroke="#fff" stroke-width="1.2"/>
 </g>
 <rect x="0" y="20" width="1701" height="25" fill="url(#tbl)"/>
 <g clip-path="url(#c2)">
  <rect x="339" y="35" width="14" height="14" fill="#3aa8f0"/><rect x="354" y="35" width="14" height="14" fill="#2a90e8"/>
  <rect x="386" y="31" width="271" height="30" rx="15" fill="#f7f5fa" stroke="#d8d6e0"/>
  <circle cx="405" cy="46" r="6" fill="none" stroke="#222" stroke-width="1.8"/>
  <text x="432" y="50" font-family="Liberation Sans" font-size="15" fill="#333">搜索</text>
  <path d="M617 45 L624 38 L631 45 Z" fill="#e8c8c8"/>
  <rect x="680" y="38" width="26" height="14" fill="#f0f0f0" stroke="#888"/><rect x="672" y="41" width="12" height="10" fill="#333"/>
  <use href="#tff" x="732" y="35"/>
  <path d="M785 40 H815 V50 H785 Z" fill="#e82020"/>
  <circle cx="854" cy="46" r="9" fill="#8c9098"/>
  <path d="M895 40 H908 L911 43 H925 V50 H895 Z" fill="#f0b820"/>
  <rect x="950" y="37" width="30" height="20" rx="6" fill="#f0186a"/><path d="M960 42 L972 48 L960 54 Z" fill="#fff"/>
  <rect x="995" y="31" width="43" height="20" rx="4" fill="#e8b0b0"/><circle cx="1016" cy="47" r="8" fill="#3ac84a"/>
  <rect x="1059" y="40" width="31" height="10" fill="#444"/><rect x="1059" y="40" width="15" height="4" fill="#bbb"/>
  <rect x="1126" y="36" width="8" height="6" fill="#e02020"/><path d="M1130 42 V50 M1119 48 H1141" stroke="#333" stroke-width="2"/>
  <circle cx="1255" cy="48" r="14" fill="none" stroke="#444" stroke-width="3"/>
  <text x="1296" y="52" font-family="Liberation Sans" font-size="17" fill="#222">扫</text>
  <path d="M1298 38 V50" stroke="#999"/>
  <circle cx="1397" cy="49" r="8" fill="none" stroke="#2a6af0" stroke-width="2.5"/>
  <circle cx="1438" cy="48" r="5" fill="none" stroke="#333" stroke-width="1.5"/>
  <text x="1467" y="52" font-family="Liberation Sans" font-size="16" fill="#333">英</text>
  <circle cx="1520" cy="49" r="7" fill="none" stroke="#333" stroke-width="1.5"/>
  <text x="1640" y="46" font-family="Liberation Sans" font-size="15" fill="#222">20:04</text>
 </g>
</svg>
</body></html>
